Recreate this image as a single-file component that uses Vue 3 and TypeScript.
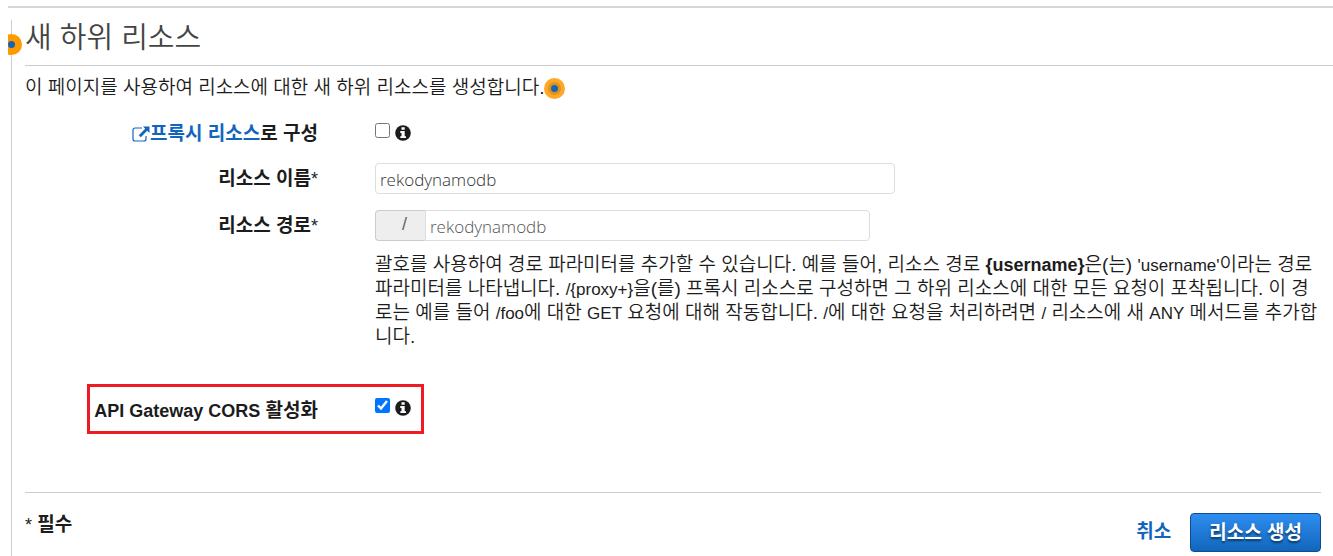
<script setup lang="ts">
import { ref } from 'vue'

const proxy = ref(false)
const cors = ref(true)
const resourceName = ref('rekodynamodb')
const resourcePath = ref('rekodynamodb')
</script>

<template>
  <div class="page">
    <main class="panel">
      <span class="beacon edge"><i class="beacon-dot"></i></span>
      <h1>새 하위 리소스</h1>
      <p class="intro">
        <span>이 페이지를 사용하여 리소스에 대한 새 하위 리소스를 생성합니다.</span>
        <span class="beacon halo"><i class="beacon-dot"></i></span>
      </p>

      <form class="form" @submit.prevent>
        <div class="row">
          <div class="label">
            <a href="#proxy"><svg class="ext" viewBox="0 0 18 16" aria-hidden="true">
              <path d="M10 2H3a2 2 0 0 0-2 2v9a2 2 0 0 0 2 2h9a2 2 0 0 0 2-2v-3" fill="none" stroke="currentColor" stroke-width="1.200" />
              <path d="M11 .5h6.500V7l-2.300-2.200-6.400 6.400-2-2 6.400-6.400z" fill="currentColor" />
            </svg>프록시 리소스</a><label for="proxy">로 구성</label>
          </div>
          <div class="field check">
            <input id="proxy" v-model="proxy" type="checkbox">
            <svg class="info" viewBox="0 0 16 16" aria-hidden="true">
              <circle cx="8" cy="8" r="7.800" fill="#1c1c1c" />
              <path d="M6.500 2.300h3.200v2.500H6.500zM5.300 6h4.400v5.200H11v1.900H5.300v-1.900h1.200V7.900H5.300z" fill="#fff" />
            </svg>
          </div>
        </div>

        <div class="row">
          <label class="label" for="name">리소스 이름<span class="star">*</span></label>
          <div class="field">
            <input id="name" v-model="resourceName" class="text name" type="text">
          </div>
        </div>

        <div class="row">
          <label class="label" for="path">리소스 경로<span class="star">*</span></label>
          <div class="field">
            <div class="group">
              <span class="prefix">/</span>
              <input id="path" v-model="resourcePath" class="text path" type="text">
            </div>
            <p class="help">
              괄호를 사용하여 경로 파라미터를 추가할 수 있습니다. 예를 들어, 리소스 경로 <b class="strong">{username}</b>은(는) <span class="latin">'username'</span>이라는 경로
              파라미터를 나타냅니다. <span class="latin">/{proxy+}</span>을(를) 프록시 리소스로 구성하면 그 하위 리소스에 대한 모든 요청이 포착됩니다. 이 경로는 예를 들어 <span class="latin">/foo</span>에 대한 <span class="latin">GET</span> 요청에 대해 작동합니다. <span class="latin">/</span>에 대한 요청을 처리하려면 <span class="latin">/</span> 리소스에 새 <span class="latin">ANY</span> 메서드를 추가합니다.
            </p>
          </div>
        </div>

        <div class="row cors-row">
          <label class="label" for="cors"><span class="strong">API Gateway CORS</span> 활성화</label>
          <div class="field check">
            <input id="cors" v-model="cors" type="checkbox">
            <svg class="info" viewBox="0 0 16 16" aria-hidden="true">
              <circle cx="8" cy="8" r="7.800" fill="#1c1c1c" />
              <path d="M6.500 2.300h3.200v2.500H6.500zM5.300 6h4.400v5.200H11v1.900H5.300v-1.900h1.200V7.900H5.300z" fill="#fff" />
            </svg>
          </div>
        </div>

        <footer class="footer">
          <span class="required"><span class="star">*</span> 필수</span>
          <div class="actions">
            <a class="cancel" href="#cancel">취소</a>
            <button class="create" type="submit">리소스 생성</button>
          </div>
        </footer>
      </form>
    </main>
  </div>
</template>

<style>
body {
  margin: 0;
  background: #fff;
}
</style>

<style scoped>
.page {
  box-sizing: border-box;
  min-height: 100vh;
  margin-left: 8px;
  padding-top: 12px;
  display: flex;
  flex-direction: column;
  position: relative;
  overflow: hidden;
  color: #1c1c1c;
  font: 350 19px/24px "Liberation Sans", "Noto Sans CJK KR", sans-serif;
}
.page::before {
  content: "";
  height: 2px;
  margin-top: -6px;
  margin-bottom: 12px;
  background: #d5d5d5;
}
.panel {
  flex: 1;
  margin-left: 3px;
  padding-left: 13px;
  border-left: 1px solid #ccc;
  position: relative;
}
h1 {
  box-sizing: border-box;
  margin: 0;
  height: 46px;
  padding-top: 1px;
  border-bottom: 1px solid #ccc;
  color: #444;
  font-size: 29px;
  font-weight: 350;
  line-height: 34px;
}
.intro {
  display: flex;
  align-items: center;
  margin: 10px 0 0;
}
.beacon {
  box-sizing: border-box;
  display: flex;
  align-items: center;
  justify-content: center;
  width: 21px;
  height: 21px;
  border-radius: 50%;
  background: #ff9900;
}
.beacon-dot {
  width: 7px;
  height: 7px;
  border-radius: 50%;
  background: #1166bb;
}
.edge {
  position: absolute;
  left: -11px;
  top: 14px;
}
.halo {
  border: 4px solid #ffa726;
  background: #e0941c;
}
.form {
  margin-right: 12px;
}
.row {
  display: grid;
  grid-template-columns: 293px minmax(0, 1fr);
  column-gap: 57px;
  margin-top: 16px;
}
.row:first-child {
  margin-top: 20px;
}
.label {
  text-align: right;
  font-weight: 700;
  line-height: 31px;
}
.row:first-child .label {
  line-height: 28px;
  height: 27px;
}
.latin {
  font-size: 17px;
  line-height: 16px;
}
.strong {
  font-size: 18px;
  font-weight: 700;
  line-height: 16px;
}
.star {
  font-size: 18px;
  font-weight: 400;
  line-height: 16px;
}
a {
  color: #1166bb;
  text-decoration: none;
}
.ext {
  width: 18px;
  height: 16px;
  vertical-align: -2px;
}
.check {
  display: flex;
  align-items: flex-start;
  gap: 5px;
  padding-top: 3px;
}
.check input {
  width: 15px;
  height: 15px;
  margin: 0;
}
.info {
  width: 16px;
  height: 16px;
  margin-top: 2px;
}
.text {
  box-sizing: border-box;
  height: 31px;
  min-width: 0;
  padding: 1px 4px 0;
  border: 1px solid #ddd;
  border-radius: 4px;
  background: #fff;
  color: #333;
  font: 350 17px/26px "Open Sans", sans-serif;
  outline: none;
}
.name {
  display: block;
  width: 100%;
  max-width: 520px;
}
.group {
  display: flex;
  width: 100%;
  max-width: 495px;
}
.prefix {
  box-sizing: border-box;
  width: 50px;
  height: 31px;
  padding-left: 5px;
  padding-right: 18px;
  border: 1px solid #ccc;
  border-right: 0;
  border-radius: 4px 0 0 4px;
  background: #eee;
  color: #666;
  font-size: 18px;
  line-height: 26px;
  text-align: right;
}
.path {
  flex: 1;
  border-radius: 0 4px 4px 0;
  color: #555;
}
.help {
  margin: 12px 0 0;
}
.cors-row {
  box-sizing: border-box;
  width: 337px;
  height: 50px;
  margin: 35px 0 0 62px;
  padding-top: 8px;
  border: 3px solid #ed1c24;
  grid-template-columns: 228px minmax(0, 1fr);
}
.footer {
  display: flex;
  justify-content: space-between;
  margin-top: 58px;
  padding-top: 20px;
  border-top: 1px solid #ccc;
  font-weight: 700;
}
.actions {
  display: flex;
  align-items: flex-start;
  gap: 19px;
}
.cancel {
  line-height: 38px;
}
.create {
  height: 39px;
  padding: 0 18px;
  border: 1px solid #0d4c91;
  border-radius: 4px;
  background: linear-gradient(#2e8df0, #1166bb);
  color: #fff;
  font: inherit;
  text-shadow: 0 2px 2px rgba(0, 0, 0, 0.5);
}
</style>
